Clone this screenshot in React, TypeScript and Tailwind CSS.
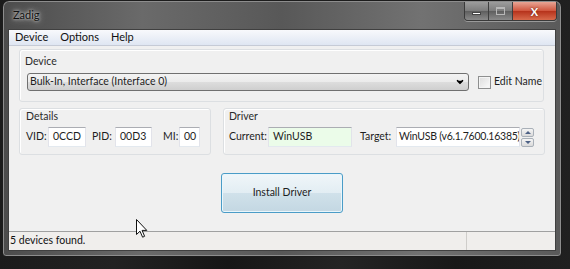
import { ChevronDown } from 'lucide-react';

const ui = { fontFamily: 'Lato, "Noto Sans", sans-serif' };

function Field({ value, className, tight }: { value: string; className: string; tight?: boolean }) {
  return (
    <div
      className={`h-[20px] flex-none flex items-center overflow-hidden border border-[#abadb3] border-l-[#e2e3ea] border-r-[#e2e3ea] border-b-[#e3e9ef] text-[#1e1e1e] ${tight ? 'pl-[2px] tracking-[-0.25px]' : 'pl-[4px]'} ${className}`}
    >
      {value}
    </div>
  );
}

function GroupBox({ label, className, children }: { label: string; className: string; children: React.ReactNode }) {
  return (
    <div className={`rounded-[3px] border border-[#dcdfe2] shadow-[inset_1px_1px_0_#ffffff] flex flex-col ${className}`}>
      <div className="leading-[13px] text-[#2b2b2b]">{label}</div>
      {children}
    </div>
  );
}

function Cursor() {
  return (
    <svg className="absolute left-[136px] top-[219px]" width="12" height="19" viewBox="0 0 12 19">
      <path d="M0.5 0.5 L0.5 15.5 L4 12.2 L6.6 18.2 L8.6 17.3 L6.1 11.4 L10.8 11.4 Z" fill="#ffffff" stroke="#111111" strokeWidth="1" strokeLinejoin="round" />
    </svg>
  );
}

export default function App() {
  return (
    <div className="w-[570px] h-[269px] overflow-hidden relative whitespace-nowrap text-[10.5px] bg-[linear-gradient(90deg,#1b1b1b,#222_20%,#161616_40%,#242424_60%,#181818_80%,#202020)]" style={ui}>
      {/* window */}
      <div className="absolute left-[2px] top-0 w-[560px] h-[257px] rounded-t-[7px] rounded-b-[4px] border border-[#1c1c1c] bg-[linear-gradient(90deg,#4c4c4c,#6a6a6a_25%,#585858_50%,#727272_75%,#5a5a5a)] shadow-[inset_0_0_0_1px_#8d8d8d] flex flex-col px-[5px] pb-[5px]">
        {/* title bar */}
        <div className="h-[28px] flex items-start justify-between relative">
          <div className="mt-[6px] ml-[2px] px-[3px] text-[11px] leading-[16px] text-[#111] [text-shadow:0_0_6px_#d0d0d0,0_0_3px_#e0e0e0]">Zadig</div>
          <div className="flex mr-[-1px] mt-[1px] rounded-b-[4px] overflow-hidden border border-[#3a3a3a] border-t-0 shadow-[0_1px_0_#9a9a9a]">
            <div className="w-[24px] h-[18px] bg-[linear-gradient(#9c9c9c,#7c7c7c_50%,#5e5e5e_51%,#8a8a8a)] border-r border-[#3e3e3e] flex items-center justify-center">
              <div className="w-[9px] h-[3px] bg-white border border-[#444] mt-[4px]" />
            </div>
            <div className="w-[24px] h-[18px] bg-[linear-gradient(#9c9c9c,#7c7c7c_50%,#5e5e5e_51%,#8a8a8a)] border-r border-[#3e3e3e] flex items-center justify-center">
              <div className="w-[9px] h-[8px] border border-[#b8b8b8] border-t-2" />
            </div>
            <div className="w-[43px] h-[18px] bg-[linear-gradient(#e8a595,#d0543c_50%,#b6321b_51%,#d86a4c)] flex items-center justify-center text-white text-[11px] font-bold leading-none [text-shadow:0_0_2px_#5a1a10]">
              X
            </div>
          </div>
        </div>

        {/* client */}
        <div className="flex-1 bg-[#f0f0f0] border border-[#404040] flex flex-col">
          {/* menu */}
          <div className="h-[16px] flex items-center gap-[12px] pl-[6px] text-[11px] text-[#111] bg-[linear-gradient(#f8f9fc,#dfe6f2)] border-b border-[#c6cbd6]">
            <span>Device</span>
            <span>Options</span>
            <span>Help</span>
          </div>

          {/* device group */}
          <GroupBox label="Device" className="mt-[3px] ml-[10px] w-[525px] h-[53px] pt-[5px] pl-[5px]">
            <div className="flex items-center mt-[5px]">
              <div className="ml-[2px] w-[442px] h-[18px] rounded-[3px] border border-[#707070] bg-[linear-gradient(#f3f3f3,#ebebeb_50%,#dddddd_51%,#cfcfcf)] flex items-center justify-between pl-[2px] pr-[3px] text-[#1e1e1e]">
                <span>Bulk-In, Interface (Interface 0)</span>
                <ChevronDown className="w-[10px] h-[10px] text-black fill-black" strokeWidth={4} />
              </div>
              <div className="ml-[9px] w-[13px] h-[13px] border border-[#8e8f8f] bg-[linear-gradient(135deg,#dcdcdc,#fbfbfb)] shadow-[inset_0_0_0_1px_#f4f4f4]" />
              <span className="ml-[3px] text-[#1e1e1e]">Edit Name</span>
            </div>
          </GroupBox>

          {/* details & driver */}
          <div className="flex gap-[12px] mt-[6px] ml-[10px]">
            <GroupBox label="Details" className="w-[192px] h-[47px] pt-[1px] pl-[6px]">
              <div className="flex items-center mt-[4px] text-[#1e1e1e]">
                <span className="w-[19px] flex-none">VID:</span>
                <Field value="0CCD" className="ml-[3px] w-[38px] bg-white" />
                <span className="ml-[6px] w-[20px] flex-none">PID:</span>
                <Field value="00D3" className="ml-[3px] w-[37px] bg-white" />
                <span className="ml-[11px] w-[14px] flex-none">MI:</span>
                <Field value="00" className="ml-[2px] w-[21px] bg-white" />
              </div>
            </GroupBox>
            <GroupBox label="Driver" className="w-[322px] h-[47px] pt-[1px] pl-[5px]">
              <div className="flex items-center mt-[4px] text-[#1e1e1e]">
                <span className="w-[37px] flex-none">Current:</span>
                <Field value="WinUSB" className="ml-[2px] w-[84px] bg-[#ebfce9]" />
                <span className="ml-[8px] w-[33px] flex-none">Target:</span>
                <Field value="WinUSB (v6.1.7600.16385)" tight className="ml-[3px] w-[124px] bg-white" />
                <div className="ml-[1px] w-[13px] h-[19px] flex flex-col gap-[1px]">
                  <div className="flex-1 border border-[#a9b0b8] rounded-[2px] bg-[linear-gradient(#f5f5f5,#dadada)] flex items-center justify-center">
                    <div className="w-0 h-0 border-l-[3px] border-r-[3px] border-b-[3px] border-l-transparent border-r-transparent border-b-[#4d6185]" />
                  </div>
                  <div className="flex-1 border border-[#a9b0b8] rounded-[2px] bg-[linear-gradient(#f5f5f5,#dadada)] flex items-center justify-center">
                    <div className="w-0 h-0 border-l-[3px] border-r-[3px] border-t-[3px] border-l-transparent border-r-transparent border-t-[#4d6185]" />
                  </div>
                </div>
              </div>
            </GroupBox>
          </div>

          {/* install button */}
          <div className="flex-1 flex justify-center pt-[18px]">
            <div className="w-[122px] h-[40px] rounded-[3px] border border-[#4a9cc7] shadow-[inset_0_0_0_1px_#e9f6fc] bg-[linear-gradient(#f0f6f9,#e2edf3_50%,#d0e1ea_51%,#c3d7e2)] flex items-center justify-center text-[#1e1e1e]">
              Install Driver
            </div>
          </div>

          {/* status bar */}
          <div className="h-[19px] flex border-t border-[#a0a0a0] bg-[#f0eeec]">
            <div className="flex-1 flex items-center pl-[1px] text-[#111] border-r border-[#cfcdca]">5 devices found.</div>
            <div className="w-[88px]" />
          </div>
        </div>
      </div>
      <Cursor />
    </div>
  );
}
